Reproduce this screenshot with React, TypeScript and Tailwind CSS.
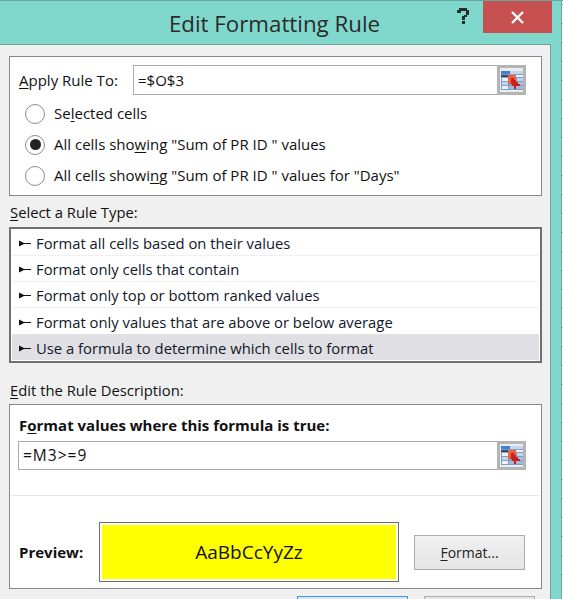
const fontClass = "font-['Open_Sans','Noto_Sans',sans-serif]";

const RangeIcon = () => (
  <svg width="22" height="19" viewBox="0 0 22 19" shapeRendering="crispEdges">
    <rect x="0" y="0" width="22" height="19" fill="#7f9dca" />
    <rect x="0" y="0" width="9" height="3" fill="#3f7fd6" />
    <rect x="9" y="0" width="13" height="3" fill="#c4d6ec" />
    <rect x="0" y="4" width="7" height="2" fill="#3b4a5e" />
    <rect x="1" y="7" width="6" height="3" fill="#eef3fa" />
    <rect x="1" y="11" width="6" height="3" fill="#c3d4ea" />
    <rect x="1" y="15" width="6" height="3" fill="#eef3fa" />
    <rect x="15" y="4" width="7" height="2" fill="#eef3fa" />
    <rect x="16" y="7" width="6" height="3" fill="#c3d4ea" />
    <rect x="16" y="11" width="6" height="3" fill="#a9c1e0" />
    <rect x="8" y="15" width="14" height="3" fill="#9db9dc" />
    <rect x="7" y="4" width="8" height="9" fill="#f0603e" />
    <path d="M10 7h3v2h2v2h2v2h2v2h-4v3h-2v-3h-2v-2h-1V9h0z" fill="#c8201a" />
  </svg>
);

const RangeButton = () => (
  <div className="w-[29px] h-full shrink-0 border-[3px] border-[#b4b4b4] bg-[#ececec] flex items-center justify-center">
    <RangeIcon />
  </div>
);

const Radio = ({ checked, children }: { checked?: boolean; children: React.ReactNode }) => (
  <div className="flex items-center gap-[9px] h-[31px]">
    <div className="w-5 h-5 rounded-full border border-[#8c8c8c] bg-white flex items-center justify-center">
      {checked && <div className="w-[11px] h-[11px] rounded-full bg-[#222]" />}
    </div>
    <span>{children}</span>
  </div>
);

const Pointer = () => (
  <svg width="12" height="7" viewBox="0 0 12 7" className="shrink-0">
    <path d="M0 .5 6 3.5 0 6.5z" fill="#111" />
    <rect x="5" y="3" width="7" height="1" fill="#111" />
  </svg>
);

const rules = [
  "Format all cells based on their values",
  "Format only cells that contain",
  "Format only top or bottom ranked values",
  "Format only values that are above or below average",
  "Use a formula to determine which cells to format",
];

// bit of the spreadsheet showing behind the dialog
const gridTicks = Array.from({ length: 31 }, (_, i) => i);

export default function App() {
  return (
    <div className={`${fontClass} relative w-[563px] h-[599px] overflow-hidden bg-[#80d8cc] border-t border-[#6aa89f] text-[15px] text-[#111]`}>
      <div className="absolute right-[11px] top-0 w-[69px] h-[32px] bg-[#c75050] flex items-center justify-center">
        <svg width="13" height="13" viewBox="0 0 13 13">
          <path d="M1 1l11 11M12 1L1 12" stroke="#fff" strokeWidth="2.4" />
        </svg>
      </div>
      <svg width="12" height="17" viewBox="0 0 12 17" shapeRendering="crispEdges" className="absolute left-[457px] top-[7px]">
        <path d="M2 0h8v2h2v5h-2v2H8v3H5V8h2V7h2V3H4v2H0V2h2zM5 13h3v3H5z" fill="#2a2a2a" />
      </svg>
      <div className="absolute right-0 top-0 bottom-0 w-[2px] border-l border-[#6aa89f] bg-white flex flex-col pt-[3px] gap-[18px]">
        {gridTicks.map((t) => (
          <div key={t} className="h-px bg-[#b8b8b8] shrink-0" />
        ))}
      </div>

      <div className="w-[549px] h-[43px] pt-[2px] flex items-center justify-center text-[22.3px] text-[#2b2b2b]">
        Edit Formatting Rule
      </div>

      <div className="w-[551px] h-[560px] bg-[#f0f0f0] border-t border-r border-[#6f9f98] pl-[9px] pr-[9px] pt-[11px]">
        <div className="w-[533px] h-[140px] bg-white border border-[#85858f] pt-[8px] pl-[9px] pr-[15px]">
          <div className="flex items-center h-[30px]">
            <span className="w-[114px]"><u className="underline-offset-2">A</u>pply Rule To:</span>
            <div className="flex-1 h-full flex border border-[#ababab] border-r-0 items-stretch">
              <div className="flex-1 pl-[4px] flex items-center">=$O$3</div>
              <div className="-my-px flex"><RangeButton /></div>
            </div>
          </div>
          <div className="pl-[6px] pt-[3px]">
            <Radio>Se<u className="underline-offset-2">l</u>ected cells</Radio>
            <Radio checked>All cells sho<u className="underline-offset-2">w</u>ing "Sum of PR ID " values</Radio>
            <Radio>All cells showi<u className="underline-offset-2">n</u>g "Sum of PR ID " values for "Days"</Radio>
          </div>
        </div>

        <div className="h-[31px] pl-px flex items-center pt-px text-[14.8px]"><u className="underline-offset-2">S</u>elect a Rule Type:</div>

        <div className="w-[533px] h-[136px] bg-white border-2 border-[#6f6f6f] p-px text-[14.8px]">
          {rules.map((rule, i) => (
            <div
              key={rule}
              className={`h-[26px] flex items-center gap-[5px] pl-[7px] pt-[2px] text-[#10182a] ${i === 4 ? "bg-[#e0dfe3]" : i < 3 ? "border-b border-[#f0f0f0]" : ""}`}
            >
              <Pointer />
              {rule}
            </div>
          ))}
        </div>

        <div className="h-[41px] pl-px flex items-end pb-[3px] text-[14.8px]"><u className="underline-offset-2">E</u>dit the Rule Description:</div>

        <div className="w-[533px] h-[185px] bg-white border border-[#85858f]">
          <div className="pl-[9px] pt-[4px] font-bold h-[36px] flex items-center"><span>F<u className="underline-offset-2">o</u>rmat values where this formula is true:</span></div>
          <div className="ml-[8px] mr-[15px] h-[29px] flex border border-[#ababab] border-r-0 items-stretch">
            <div className="flex-1 pl-[4px] flex items-center tracking-[1px] text-[15.5px]">=M3&gt;=9</div>
            <div className="-my-px flex"><RangeButton /></div>
          </div>
          <div className="mx-px mt-[25px] border-t border-[#e6e6e6]" />
          <div className="flex items-center mt-[26px] pl-[9px]">
            <span className="w-[80px] font-bold">Preview:</span>
            <div className="w-[300px] h-[60px] border border-[#6f6f6f] p-[2px]">
              <div className="w-full h-full bg-[#ffff00] flex items-center justify-center text-[19px] text-[#111]">AaBbCcYyZz</div>
            </div>
            <button className="ml-[15px] w-[111px] h-[35px] border border-[#acacac] bg-gradient-to-b from-[#f0f0f0] to-[#e5e5e5] text-[14px] text-[#222]">
              <u className="underline-offset-2">F</u>ormat...
            </button>
          </div>
        </div>

        <div className="flex gap-[16px] pl-[288px] pt-[7px]">
          <div className="w-[111px] h-[30px] border border-[#3399ff] bg-[#e5e5e5] shrink-0" />
          <div className="w-[111px] h-[30px] border border-[#acacac] bg-[#e5e5e5] shrink-0" />
        </div>
      </div>
    </div>
  );
}
